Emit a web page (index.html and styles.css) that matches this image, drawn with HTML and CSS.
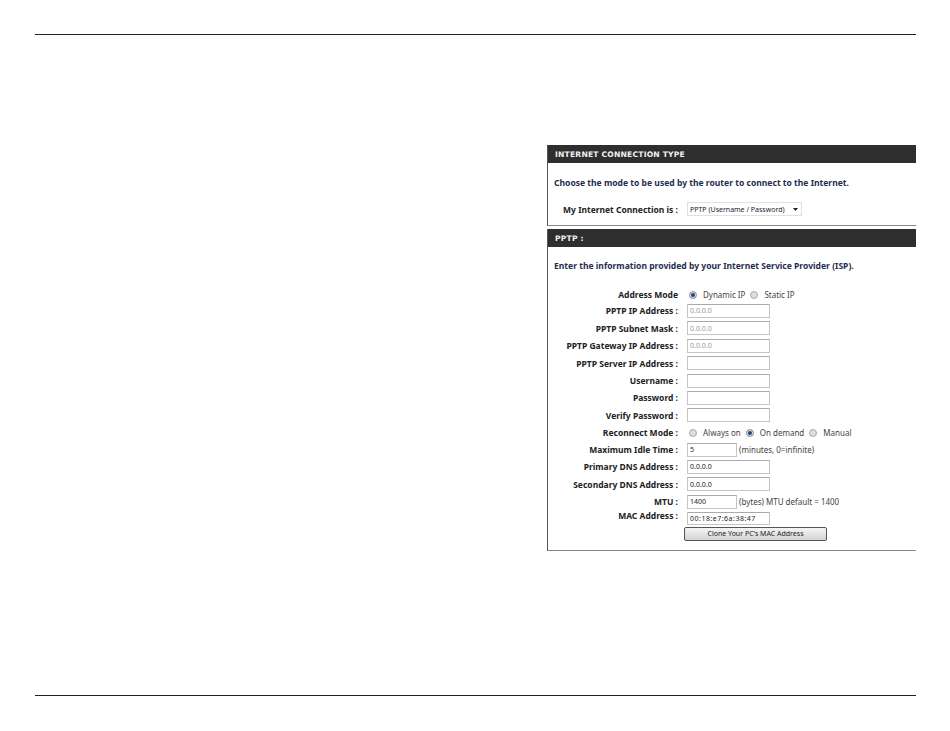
FILE: index.html
```html
<!DOCTYPE html>
<html lang="en">
<head>
<meta charset="utf-8">
<title>PPTP settings</title>
<link rel="stylesheet" href="styles.css">
</head>
<body>
<div class="page">
  <hr class="rule">
  <main class="content">
    <section class="panel first">
      <h2 class="bar">INTERNET CONNECTION TYPE</h2>
      <p class="intro">Choose the mode to be used by the router to connect to the Internet.</p>
      <div class="row conn">
        <span class="label">My Internet Connection is :</span>
        <span class="select">PPTP (Username / Password)<svg class="caret" width="5" height="3" viewBox="0 0 5 3"><path d="M0 0h5L2.5 3z" fill="#222"/></svg></span>
      </div>
    </section>
    <section class="panel second">
      <h2 class="bar">PPTP :</h2>
      <p class="intro tight">Enter the information provided by your Internet Service Provider (ISP).</p>
      <div class="form">
        <div class="row h15"><span class="label">Address Mode</span><span class="ctl"><i class="radio on"></i><span class="opt">Dynamic IP</span><i class="radio"></i><span class="opt">Static IP</span></span></div>
        <div class="row h17"><span class="label">PPTP IP Address :</span><input class="field off" value="0.0.0.0"></div>
        <div class="row h18"><span class="label">PPTP Subnet Mask :</span><input class="field off" value="0.0.0.0"></div>
        <div class="row h17"><span class="label">PPTP Gateway IP Address :</span><input class="field off" value="0.0.0.0"></div>
        <div class="row h18"><span class="label">PPTP Server IP Address :</span><input class="field"></div>
        <div class="row h17"><span class="label">Username :</span><input class="field"></div>
        <div class="row h17"><span class="label">Password :</span><input class="field"></div>
        <div class="row h18"><span class="label">Verify Password :</span><input class="field"></div>
        <div class="row h17"><span class="label">Reconnect Mode :</span><span class="ctl"><i class="radio"></i><span class="opt">Always on</span><i class="radio on"></i><span class="opt">On demand</span><i class="radio"></i><span class="opt">Manual</span></span></div>
        <div class="row h17"><span class="label">Maximum Idle Time :</span><input class="field short" value="5"><span class="note">(minutes, 0=infinite)</span></div>
        <div class="row h17"><span class="label">Primary DNS Address :</span><input class="field" value="0.0.0.0"></div>
        <div class="row h18"><span class="label">Secondary DNS Address :</span><input class="field" value="0.0.0.0"></div>
        <div class="row h17"><span class="label">MTU :</span><input class="field short" value="1400"><span class="note">(bytes) MTU default = 1400</span></div>
        <div class="row mac"><span class="label">MAC Address :</span><input class="field wide" value="00:18:e7:6a:38:47"></div>
        <div class="row h17"><span class="label"></span><button class="btn" type="button">Clone Your PC's MAC Address</button></div>
      </div>
    </section>
  </main>
  <hr class="rule bottom">
</div>
</body>
</html>
```
FILE: styles.css
```css
* { box-sizing: border-box; }
html, body { margin: 0; padding: 0; background: #fff; }
body { font-family: "Noto Sans", "DejaVu Sans", sans-serif; color: #222; }
.page { width: 950px; height: 731px; padding: 34px 34px 0 35px; }
.rule { margin: 0; height: 1px; border: 0; background: #222; }
.rule.bottom { margin-top: 144px; }
.content { margin: 110px 0 0 512px; width: 369px; }
.panel { border-left: 1px solid #555; border-bottom: 1px solid #888; }
.panel.first { height: 81px; }
.panel.second { height: 322px; margin-top: 3px; }
.bar {
  margin: 0; height: 18px; padding-left: 7px;
  background: #2e2e2e; color: #f2f2f2;
  font-family: "DejaVu Sans", sans-serif;
  font-size: 7.6px; font-weight: 700; line-height: 20px; letter-spacing: 0.2px;
}
.intro {
  margin: 0; padding: 14px 0 0 6px; height: 31px;
  font-size: 8.55px; font-weight: 700; line-height: 13px; color: #1f2d50; white-space: nowrap;
}
.intro.tight { padding-top: 13px; }
.row {
  display: grid; grid-template-columns: 130px auto; column-gap: 8px;
  align-items: center; justify-content: start; white-space: nowrap;
}
.row .ctl, .row .field, .row .select, .row .btn { grid-column: 2; }
.row:has(.note) { grid-template-columns: 130px 50px auto; }
.row:has(.note) .note { grid-column: 3; margin-left: -5px; }
.label { font-size: 8.5px; font-weight: 700; text-align: right; color: #222; }
.conn { height: 14px; margin-top: 8px; }
.form { margin-top: 9px; }
.h15 { height: 15px; }
.h17 { height: 17px; }
.h18 { height: 18px; }
.mac { height: 15px; align-items: start; }
.mac .field { margin-top: 2px; height: 13px; }
.field {
  width: 83px; height: 14px; margin: 0 0 0 1px; padding: 0 0 0 2px;
  border: 1px solid #c4c4c4; border-top-color: #aaa; border-radius: 0; background: #fff;
  font: 7px "Noto Sans", "DejaVu Sans", sans-serif; color: #222; outline: none;
}
.field.off { color: #999; }
.field.short { width: 50px; }
.field.wide { letter-spacing: 0.5px; }
.select {
  display: flex; align-items: center; justify-content: space-between;
  width: 115px; height: 14px; margin-left: 1px; padding: 0 3px 0 2px;
  border: 1px solid #e0e0e0; background: #fff; font-size: 7px; color: #223;
}
.ctl { display: flex; align-items: center; padding-left: 3px; }
.opt { font-size: 8px; color: #444; margin: 0 5px 0 6px; }
.note { font-size: 8px; color: #444; }
.radio {
  display: block; width: 8px; height: 8px; border-radius: 50%;
  border: 1px solid #aaa; background: #dedede;
}
.radio.on { background: #24407a; box-shadow: inset 0 0 0 1px #e4e8ee; }
.btn {
  display: block; width: 143px; height: 14px; margin: 0 0 0 -2px; padding: 0;
  border: 1px solid #555; border-radius: 2px;
  background: linear-gradient(#f4f4f4, #d4d4d4);
  font: 7px "Noto Sans", "DejaVu Sans", sans-serif; color: #222;
}
```
